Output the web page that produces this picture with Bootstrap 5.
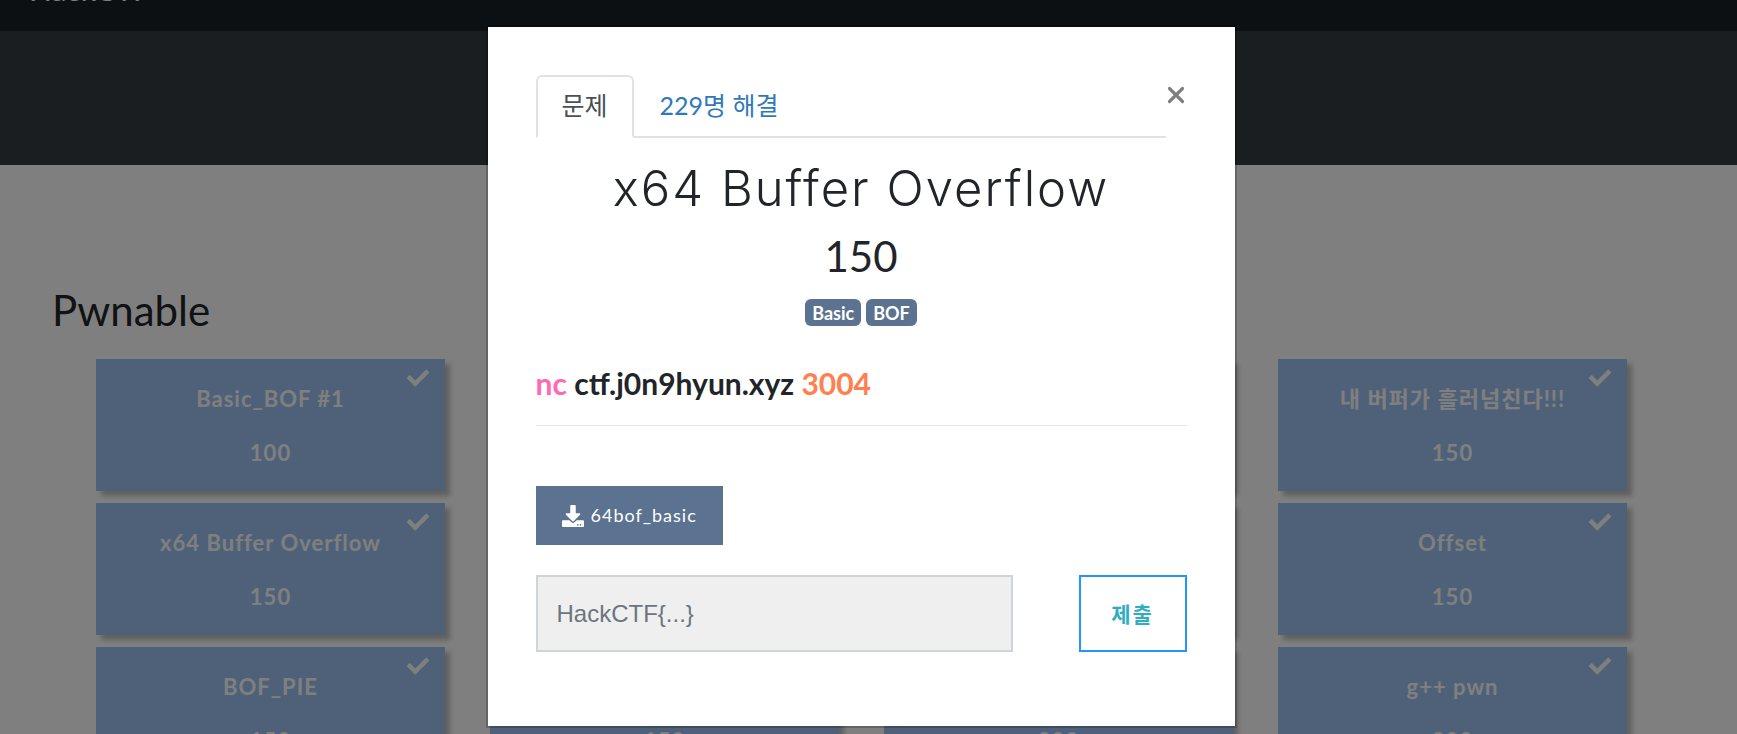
<!DOCTYPE html>
<html lang="ko">
<head>
<meta charset="utf-8">
<meta name="viewport" content="width=device-width, initial-scale=1">
<title>HackCTF</title>
<link rel="stylesheet" href="https://cdn.jsdelivr.net/npm/bootstrap@5.3.0/dist/css/bootstrap.min.css">
<style>
  body { font-family: Lato, "Noto Sans CJK KR", sans-serif; font-size: 24px; color: #212529; overflow: hidden; }
  /* The page is scrolled down a little: the top bar is partly out of view */
  .topbar { margin-top: -53px; height: 84px; padding: 0 29px; background: #182025; }
  .topbar .navbar-brand { font-size: 30px; line-height: 36px; color: #fff; }
  .hero { height: 134px; background: #343c41; }
  .board { padding: 120px 110px 0 52px; }
  .board h3 { font-size: 42px; line-height: 50px; font-weight: 400; margin-bottom: 24px; }
  .challenge-grid { padding-left: 44px; }
  .challenges { --bs-gutter-x: 45px; --bs-gutter-y: 12px; }
  .challenge { height: 132px; padding: 26px 12px; border: 0; background: #9dc3f2; color: #fff;
    font-size: 22px; line-height: 27px; font-weight: 700; letter-spacing: 1px; box-shadow: 5px 5px 5px rgba(0,0,0,.25); }
  .challenge .tick { position: absolute; top: 8px; right: 16px; width: 22px; height: 22px; }
  .challenge p { margin: 0 0 27px; }

  .modal { padding-right: 15px; }
  .modal-dialog { max-width: 751px; margin: 25px auto; }
  .modal-content { border: 2px solid rgba(0,0,0,.2); border-radius: 0; padding: 48px 48px 74px; }
  .nav-tabs { border-bottom: 2px solid #dee2e6; font-size: 25px; }
  .nav-tabs .nav-link { border-width: 2px; margin-bottom: -2px; padding: 10px 24px 13px; line-height: 36px; border-radius: 6px 6px 0 0; color: #3079b8; }
  .nav-tabs .nav-link.active { color: #495057; }
  .close-x { width: 21px; padding: 0; border: 0; background: none; color: #808080; }
  .chal-name { font-family: Inter, sans-serif; font-size: 49px; line-height: 58px; font-weight: 300; letter-spacing: 2px; margin: 22px 0 13px; }
  .chal-value { font-size: 42px; line-height: 50px; font-weight: 400; margin-bottom: 18px; }
  .tags { gap: 5px; }
  .tags .badge { font-size: 18px; line-height: 18px; padding: 5px 7px 4px; border-radius: 6px; background: #5b7290; }
  .conn { font-size: 30px; line-height: 36px; font-weight: 700; margin: 39px 0 24px; }
  .conn .cmd { color: #ff69b4; }
  .conn .port { color: #ff7f50; }
  .rule { margin: 0 0 60px; opacity: .1; color: #000; }
  .btn-file { padding: 16px 26px; border: 0; border-radius: 0; background: #5b7290; color: #fff; font-size: 18px; line-height: 27px; letter-spacing: 1px; gap: 7px; }
  .btn-file:hover { background: #4c607a; color: #fff; }
  .flag { height: 77px; padding: 0 19px; border: 2px solid #ced4da; border-radius: 0; background: #efefef; font: 24px "Liberation Sans", Arial, sans-serif; }
  .flag::placeholder { color: #6c757d; }
  .answer { margin-top: 30px; gap: 66px; }
  .btn-send { width: 108px; flex: none; border: 2px solid #2196ff; border-radius: 0; color: #2fadc2; font-size: 21px; font-weight: 700; letter-spacing: 2px; padding: 0; }
</style>
</head>
<body>
<svg class="d-none" aria-hidden="true">
  <symbol id="tick" viewBox="0 0 512 512"><path fill="currentColor" d="M173.898 439.404l-166.4-166.4c-9.997-9.997-9.997-26.206 0-36.204l36.203-36.204c9.997-9.998 26.207-9.998 36.204 0L192 312.69 432.095 72.596c9.997-9.997 26.207-9.997 36.204 0l36.203 36.204c9.997 9.997 9.997 26.206 0 36.204l-294.4 294.401c-9.998 9.997-26.207 9.997-36.204-.001z"/></symbol>
</svg>

<nav class="navbar topbar"><a class="navbar-brand p-0" href="#">HackCTF</a></nav>
<header class="hero"></header>

<main class="board">
  <h3>Pwnable</h3>
  <div class="challenge-grid">
  <div class="row row-cols-4 challenges">
    <div class="col"><button class="challenge position-relative d-block w-100" type="button"><svg class="tick"><use href="#tick"/></svg><p>Basic_BOF #1</p><span>100</span></button></div>
    <div class="col"><button class="challenge position-relative d-block w-100" type="button"><svg class="tick"><use href="#tick"/></svg><p>Basic_BOF #2</p><span>100</span></button></div>
    <div class="col"><button class="challenge position-relative d-block w-100" type="button"><svg class="tick"><use href="#tick"/></svg><p>Basic_FSB</p><span>100</span></button></div>
    <div class="col"><button class="challenge position-relative d-block w-100" type="button"><svg class="tick"><use href="#tick"/></svg><p>내 버퍼가 흘러넘친다!!!</p><span>150</span></button></div>
    <div class="col"><button class="challenge position-relative d-block w-100" type="button"><svg class="tick"><use href="#tick"/></svg><p>x64 Buffer Overflow</p><span>150</span></button></div>
    <div class="col"><button class="challenge position-relative d-block w-100" type="button"><svg class="tick"><use href="#tick"/></svg><p>x64 Simple_size_BOF</p><span>150</span></button></div>
    <div class="col"><button class="challenge position-relative d-block w-100" type="button"><svg class="tick"><use href="#tick"/></svg><p>Simple_Overflow_ver_2</p><span>150</span></button></div>
    <div class="col"><button class="challenge position-relative d-block w-100" type="button"><svg class="tick"><use href="#tick"/></svg><p>Offset</p><span>150</span></button></div>
    <div class="col"><button class="challenge position-relative d-block w-100" type="button"><svg class="tick"><use href="#tick"/></svg><p>BOF_PIE</p><span>150</span></button></div>
    <div class="col"><button class="challenge position-relative d-block w-100" type="button"><svg class="tick"><use href="#tick"/></svg><p>Yes_or_no</p><span>150</span></button></div>
    <div class="col"><button class="challenge position-relative d-block w-100" type="button"><svg class="tick"><use href="#tick"/></svg><p>RTL_World</p><span>200</span></button></div>
    <div class="col"><button class="challenge position-relative d-block w-100" type="button"><svg class="tick"><use href="#tick"/></svg><p>g++ pwn</p><span>200</span></button></div>
  </div>
  </div>
</main>

<div class="modal-backdrop show"></div>
<div class="modal d-block" tabindex="-1" role="dialog" aria-labelledby="chal-name">
  <div class="modal-dialog">
    <div class="modal-content">
      <div class="d-flex align-items-start">
        <ul class="nav nav-tabs flex-grow-1">
          <li class="nav-item"><a class="nav-link active" href="#challenge">문제</a></li>
          <li class="nav-item"><a class="nav-link" href="#solves">229명 해결</a></li>
        </ul>
        <button class="close-x d-flex justify-content-center pt-2" type="button" aria-label="닫기">
          <svg width="18" height="24" viewBox="0 0 18 24"><path d="M2.5 5.5l13 13m0-13l-13 13" stroke="currentColor" stroke-width="3.2" stroke-linecap="round"/></svg>
        </button>
      </div>
      <div id="challenge">
        <h2 class="chal-name text-center" id="chal-name">x64 Buffer Overflow</h2>
        <h3 class="chal-value text-center">150</h3>
        <div class="tags d-flex justify-content-center"><span class="badge">Basic</span><span class="badge">BOF</span></div>
        <p class="conn"><span class="cmd">nc</span> ctf.j0n9hyun.xyz <span class="port">3004</span></p>
        <hr class="rule">
        <a class="btn btn-file d-inline-flex align-items-center" href="#download">
          <svg width="22" height="22" viewBox="0 0 512 512" aria-hidden="true"><path fill="currentColor" d="M216 0h80c13.3 0 24 10.7 24 24v168h87.7c17.8 0 26.7 21.5 14.1 34.1L269.7 378.3c-7.5 7.5-19.8 7.5-27.3 0L90.1 226.1c-12.6-12.6-3.7-34.1 14.1-34.1H192V24c0-13.3 10.7-24 24-24zm296 376v112c0 13.3-10.7 24-24 24H24c-13.3 0-24-10.7-24-24V376c0-13.3 10.7-24 24-24h146.7l49 49c20.1 20.1 52.5 20.1 72.6 0l49-49H488c13.3 0 24 10.7 24 24zm-124 88c0-11-9-20-20-20s-20 9-20 20 9 20 20 20 20-9 20-20zm64 0c0-11-9-20-20-20s-20 9-20 20 9 20 20 20 20-9 20-20z"/></svg>
          <span>64bof_basic</span>
        </a>
        <form class="answer d-flex">
          <input class="form-control flag" type="text" placeholder="HackCTF{...}" aria-label="플래그">
          <button class="btn btn-send" type="button">제출</button>
        </form>
      </div>
    </div>
  </div>
</div>
<script src="https://cdn.jsdelivr.net/npm/bootstrap@5.3.0/dist/js/bootstrap.bundle.min.js"></script>
</body>
</html>
